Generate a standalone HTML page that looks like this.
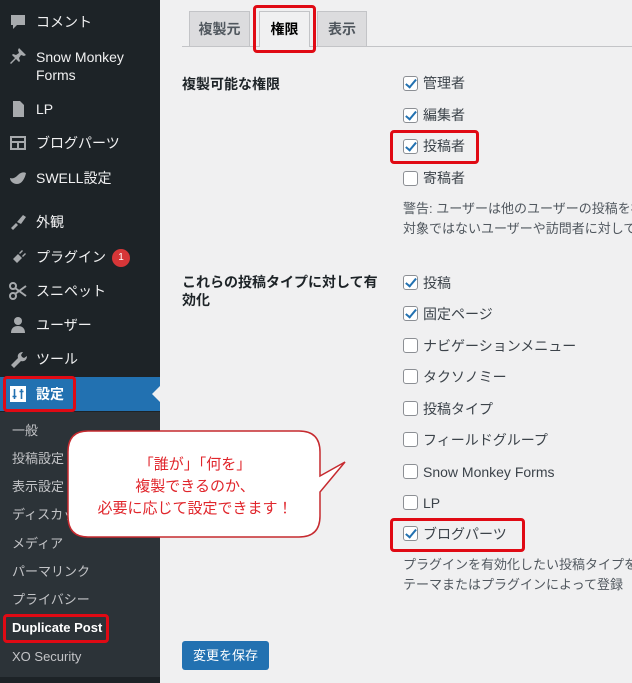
<!DOCTYPE html>
<html><head><meta charset="utf-8"><style>
*{margin:0;padding:0;box-sizing:border-box}
html,body{width:632px;height:683px;overflow:hidden}
body{background:#f0f0f1;font-family:"Liberation Sans","Noto Sans CJK JP",sans-serif;position:relative}
#wrap{position:absolute;left:0;top:0;width:632px;height:683px;overflow:hidden}
.a{position:absolute;white-space:nowrap}
#side{position:absolute;left:0;top:0;width:160px;height:683px;background:#1d2327}
#sub{position:absolute;left:0;top:412px;width:160px;height:265px;background:#2c3338}
.m{position:absolute;left:36px;color:#f0f0f1;font-size:14px;line-height:18px}
.ic{position:absolute;left:9px;width:18px;height:18px;fill:#a7aaad}
.s{position:absolute;left:12px;color:#c3c4c7;font-size:13px;line-height:16px}
.cb{position:absolute;left:403px;width:15px;height:15px;border:1px solid #8c8f94;border-radius:3px;background:#fff}
.cb.on::after{content:"";position:absolute;left:4px;top:0px;width:4px;height:9px;border:solid #2271b1;border-width:0 2.5px 2.5px 0;transform:rotate(40deg)}
.l{position:absolute;left:423px;font-size:14px;color:#3c434a;line-height:16px}
.red{position:absolute;border:3px solid #e00a14;border-radius:4px}
</style></head><body><div id="wrap">
<div id="side"></div><div id="sub"></div>
<div class="a" style="left:0;top:377px;width:160px;height:34px;background:#2271b1"></div>
<div class="a" style="left:152px;top:386px;width:0;height:0;border-top:8px solid transparent;border-bottom:8px solid transparent;border-right:8px solid #f0f0f1"></div>
<svg class="ic" style="top:13px" viewBox="0 0 18 18"><path d="M2 2h14v10H8l-4 4v-4H2z"/></svg>
<svg class="ic" style="top:47px" viewBox="0 0 18 18"><path d="M10 1l7 7-2 1-3-1-2 3 1 3-1 1-3-3-5 5-1-1 5-5-3-3 1-1 3 1 3-2-1-3z"/></svg>
<svg class="ic" style="top:100px" viewBox="0 0 18 18"><path d="M4 1h7l4 4v12H4z"/></svg>
<svg class="ic" style="top:134px" viewBox="0 0 18 18"><path d="M1 2h16v14H1zM3 4v3h12V4zM3 9v5h5V9zM10 9v5h5V9z" fill-rule="evenodd"/></svg>
<svg class="ic" style="top:169px" viewBox="0 0 18 18"><path d="M1 9c3 1 5 0 8-3s6-3 8-2c-1 5-4 11-9 11-4 0-7-3-7-6z"/></svg>
<svg class="ic" style="top:213px" viewBox="0 0 18 18"><path d="M2 15l5-5 2 2-5 5zM8 9l6-7 3 2-5 7z"/></svg>
<svg class="ic" style="top:248px" viewBox="0 0 18 18"><path d="M3 16l3-3-2-2 5-5 4 4-5 5-2-2-3 3zM10 5l3-3 1 1-3 3zM13 8l3-3 1 1-3 3z"/></svg>
<svg class="ic" style="top:282px" viewBox="0 0 18 18"><circle cx="4" cy="4" r="3" fill="none" stroke="#a7aaad" stroke-width="2"/><circle cx="4" cy="14" r="3" fill="none" stroke="#a7aaad" stroke-width="2"/><path d="M6 6l11 8M6 12l11-8" stroke="#a7aaad" stroke-width="2"/></svg>
<svg class="ic" style="top:316px" viewBox="0 0 18 18"><circle cx="9" cy="5" r="4"/><path d="M2 17c0-5 3-7 7-7s7 2 7 7z"/></svg>
<svg class="ic" style="top:350px" viewBox="0 0 18 18"><path d="M2 15l7-7c-1-3 1-6 5-6l-2 3 1 2 2 1 3-2c0 4-3 6-6 5l-7 7z"/></svg>
<svg class="ic" style="top:385px" viewBox="0 0 18 18"><rect x="1" y="1" width="16" height="16" fill="#fff"/><path d="M5.5 4v10M3.5 11.5h4M12.5 4v10M10.5 6.5h4" stroke="#2271b1" stroke-width="1.6"/></svg>
<div class="m" style="top:13px">コメント</div>
<div class="m" style="top:48px;line-height:18px">Snow Monkey<br>Forms</div>
<div class="m" style="top:100px">LP</div>
<div class="m" style="top:134px">ブログパーツ</div>
<div class="m" style="top:169px">SWELL設定</div>
<div class="m" style="top:213px">外観</div>
<div class="m" style="top:248px">プラグイン</div>
<div class="a" style="left:112px;top:249px;width:18px;height:18px;border-radius:9px;background:#d63638;color:#fff;font-size:10px;line-height:18px;text-align:center">1</div>
<div class="m" style="top:282px">スニペット</div>
<div class="m" style="top:316px">ユーザー</div>
<div class="m" style="top:350px">ツール</div>
<div class="m" style="top:385px;color:#fff;font-weight:bold">設定</div>
<div class="red" style="left:3px;top:376px;width:73px;height:36px"></div>
<div class="s" style="top:423px">一般</div>
<div class="s" style="top:451px">投稿設定</div>
<div class="s" style="top:479px">表示設定</div>
<div class="s" style="top:507px">ディスカッション</div>
<div class="s" style="top:536px">メディア</div>
<div class="s" style="top:564px">パーマリンク</div>
<div class="s" style="top:592px">プライバシー</div>
<div class="s" style="top:620px;color:#fff;font-weight:bold">Duplicate Post</div>
<div class="red" style="left:3px;top:614px;width:106px;height:29px"></div>
<div class="s" style="top:649px">XO Security</div>

<div class="a" style="left:182px;top:46px;width:450px;height:1px;background:#c3c4c7"></div>
<div class="a" style="left:189px;top:11px;width:61px;height:36px;background:#dcdcde;border:1px solid #c3c4c7;font-size:14px;font-weight:bold;color:#50575e;text-align:center;line-height:34px">複製元</div>
<div class="a" style="left:259px;top:11px;width:51px;height:36px;background:#f0f0f1;border:1px solid #c3c4c7;border-bottom:none;font-size:14px;font-weight:bold;color:#000;text-align:center;line-height:34px">権限</div>
<div class="a" style="left:317px;top:11px;width:50px;height:36px;background:#dcdcde;border:1px solid #c3c4c7;font-size:14px;font-weight:bold;color:#50575e;text-align:center;line-height:34px">表示</div>
<div class="red" style="left:253px;top:5px;width:63px;height:48px"></div>

<div class="a" style="left:182px;top:74px;font-size:14px;font-weight:bold;color:#1d2327">複製可能な権限</div>
<div class="cb on" style="top:76px"></div><div class="l" style="top:75px">管理者</div>
<div class="cb on" style="top:108px"></div><div class="l" style="top:107px">編集者</div>
<div class="cb on" style="top:139px"></div><div class="l" style="top:138px">投稿者</div>
<div class="cb" style="top:171px"></div><div class="l" style="top:170px">寄稿者</div>
<div class="red" style="left:390px;top:130px;width:89px;height:34px"></div>
<div class="a" style="left:403px;top:199px;font-size:13px;color:#50575e;line-height:20px">警告: ユーザーは他のユーザーの投稿を複製できるようになります。<br>対象ではないユーザーや訪問者に対しても</div>

<div class="a" style="left:182px;top:273px;font-size:14px;font-weight:bold;color:#1d2327;line-height:18px">これらの投稿タイプに対して有<br>効化</div>
<div class="cb on" style="top:275px"></div><div class="l" style="top:275px">投稿</div>
<div class="cb on" style="top:306px"></div><div class="l" style="top:306px">固定ページ</div>
<div class="cb" style="top:338px"></div><div class="l" style="top:338px">ナビゲーションメニュー</div>
<div class="cb" style="top:369px"></div><div class="l" style="top:369px">タクソノミー</div>
<div class="cb" style="top:401px"></div><div class="l" style="top:401px">投稿タイプ</div>
<div class="cb" style="top:432px"></div><div class="l" style="top:432px">フィールドグループ</div>
<div class="cb" style="top:464px"></div><div class="l" style="top:464px">Snow Monkey Forms</div>
<div class="cb" style="top:495px"></div><div class="l" style="top:495px">LP</div>
<div class="cb on" style="top:526px"></div><div class="l" style="top:526px">ブログパーツ</div>
<div class="red" style="left:390px;top:518px;width:135px;height:34px"></div>
<div class="a" style="left:403px;top:555px;font-size:13px;color:#50575e;line-height:20px">プラグインを有効化したい投稿タイプを選択してください。<br>テーマまたはプラグインによって登録</div>

<div class="a" style="left:182px;top:641px;width:87px;height:29px;background:#2271b1;border-radius:3px;color:#fff;font-size:13px;text-align:center;line-height:29px">変更を保存</div>

<svg class="a" style="left:0;top:0" width="632" height="683">
<path d="M88 431 H299 Q320 431 320 452 V476 L345 462 L320 492 V516 Q320 537 299 537 H88 Q68 537 68 516 V452 Q68 431 88 431 Z" fill="#fff" stroke="#c62a2f" stroke-width="1.5"/>
<text x="195" y="469" font-size="15" fill="#e0262c" text-anchor="middle" font-family="Liberation Sans,Noto Sans CJK JP,sans-serif">「誰が」「何を」</text>
<text x="195" y="491" font-size="15" fill="#e0262c" text-anchor="middle" font-family="Liberation Sans,Noto Sans CJK JP,sans-serif">複製できるのか、</text>
<text x="195" y="513" font-size="15" fill="#e0262c" text-anchor="middle" font-family="Liberation Sans,Noto Sans CJK JP,sans-serif">必要に応じて設定できます！</text>
</svg>
</div></body></html>
